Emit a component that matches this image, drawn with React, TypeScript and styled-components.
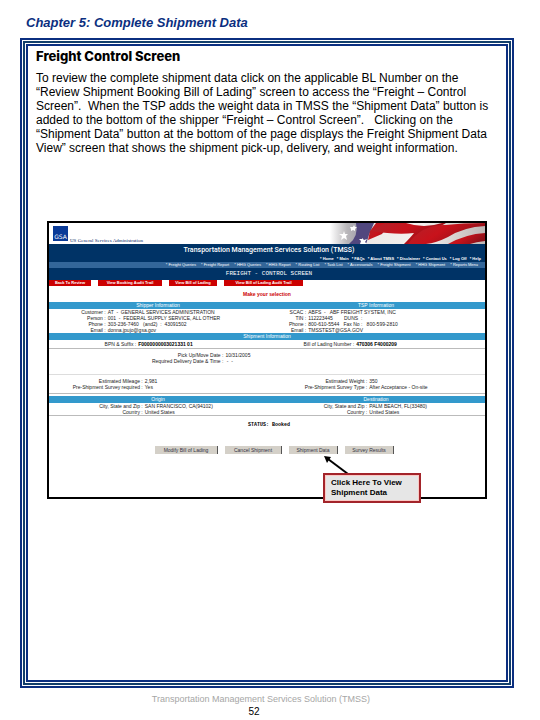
import React from 'react';
import styled, { createGlobalStyle } from 'styled-components';

const GlobalStyle = createGlobalStyle`
  *, *::before, *::after { box-sizing: border-box; }
  body { margin: 0; background: #fff; color: #000; font-family: "Liberation Sans", Arial, sans-serif; }
  h1, h2, h3, p, dl, dd { margin: 0; }
`;

const Page = styled.main`
  display: flex;
  flex-direction: column;
  min-height: 100vh;
  padding: 13px 26px 0 20px;
`;

const Chapter = styled.h1`
  height: 25px;
  padding-left: 6px;
  font-size: 13px;
  line-height: 20px;
  font-style: italic;
  font-weight: 700;
  color: #0b2f80;
`;

const FrameOuter = styled.div`
  display: flex;
  flex: 1;
  border: 2px solid #0b2f80;
  padding: 1px;
`;

const FrameMiddle = styled.div`
  display: flex;
  flex: 1;
  min-width: 0;
  border: 2px solid #123f6b;
  padding: 1px;
`;

const FrameInner = styled.article`
  flex: 1;
  min-width: 0;
  border: 2px solid #0b2f80;
  padding: 2px 8px 24px;
`;

const SectionTitle = styled.h2`
  font-family: Inter, "Liberation Sans", sans-serif;
  font-size: 13px;
  line-height: 16px;
  font-weight: 800;
`;

const Paragraph = styled.p`
  margin-top: 7px;
  font-size: 12px;
  line-height: 14px;
  white-space: pre-line;
`;

const Screen = styled.section`
  position: relative;
  margin: 66px 11px 0;
  border: 2px solid #000;
  min-height: 278px;
  font-size: 5px;
  line-height: 6px;
  color: #222;
`;

const Banner = styled.div`
  display: flex;
  justify-content: space-between;
  height: 21px;
`;

const Brand = styled.div`
  display: flex;
  align-items: flex-end;
  gap: 2px;
  padding-left: 4px;
`;

const Logo = styled.span`
  width: 15px;
  height: 15px;
  margin-bottom: 3px;
  padding-top: 7px;
  background: #0a3a97;
  color: #fff;
  font: 6px/7px "DejaVu Sans", sans-serif;
  text-align: center;
`;

const BrandName = styled.span`
  font: 400 5px/7px "Liberation Serif", serif;
  color: #0a2a68;
`;

const Flag = styled.svg`
  display: block;
  width: 155px;
  height: 21px;
`;

const Masthead = styled.header`
  background: #003366;
  color: #fff;
  text-align: center;
`;

const SystemName = styled.div`
  height: 12px;
  padding-left: 4px;
  font: 500 7px/12px Roboto, sans-serif;
`;

const LinkRow = styled.nav<{ $bar?: boolean }>`
  display: flex;
  justify-content: flex-end;
  gap: ${(p) => (p.$bar ? 5 : 3)}px;
  height: 6px;
  padding-right: ${(p) => (p.$bar ? 7 : 4)}px;
  background: ${(p) => (p.$bar ? '#336699' : 'transparent')};
  font-size: 4px;
  font-weight: ${(p) => (p.$bar ? 400 : 700)};
  white-space: nowrap;
`;

const NavLink = styled.a`
  color: inherit;
  text-decoration: none;
`;

const ScreenName = styled.div`
  height: 12px;
  padding-left: 4px;
  font: 6px/12px "Liberation Mono", monospace;
`;

const TabRow = styled.div`
  display: flex;
  gap: 7px;
  height: 6px;
`;

const Tab = styled.button<{ $width: number }>`
  width: ${(p) => p.$width}px;
  height: 6px;
  padding: 0;
  border: 0;
  background: #cc0000;
  color: #fff;
  font: 700 4px/6px "Liberation Sans", sans-serif;
`;

const Prompt = styled.p`
  height: 16px;
  color: #cc0000;
  font-weight: 700;
  line-height: 16px;
  text-align: center;
`;

const Columns = styled.div`
  display: grid;
  grid-template-columns: 1fr 1fr;
`;

const Heading = styled.h3<{ $gap?: boolean }>`
  height: 7px;
  margin-top: ${(p) => (p.$gap ? 2 : 0)}px;
  background: #3399cc;
  color: #fff;
  font-size: 5px;
  line-height: 7px;
  font-weight: 400;
  text-align: center;
`;

const Fields = styled.dl<{ $split: number; $pad?: number; $rule?: boolean }>`
  display: grid;
  grid-template-columns: ${(p) => p.$split}% 1fr;
  align-content: start;
  padding: ${(p) => p.$pad ?? 0}px 0;
  border-bottom: ${(p) => (p.$rule ? '1px solid #bbb' : '0')};
  white-space: pre;
`;

const Term = styled.dt`
  text-align: right;
`;

const Value = styled.dd<{ $strong?: boolean }>`
  padding-left: 2px;
  font-weight: ${(p) => (p.$strong ? 700 : 400)};
  color: ${(p) => (p.$strong ? '#000' : 'inherit')};
`;

const Dates = styled.div`
  height: 26px;
  border-bottom: 1px solid #ddd;
`;

const Status = styled.p`
  padding: 6px 0 0 4px;
  color: #000;
  font: 700 5px/6px "Liberation Mono", monospace;
  text-align: center;
`;

const Actions = styled.div`
  display: flex;
  gap: 7px;
  margin-top: 18px;
  padding-left: 106px;
`;

const ActionButton = styled.button<{ $width: number }>`
  width: ${(p) => p.$width}px;
  height: 8px;
  padding: 0;
  border: 0;
  border-right: 1px solid #555;
  background: #d4d0c8;
  color: #334;
  font: 5px/8px "Liberation Sans", sans-serif;
  white-space: nowrap;
`;

const Callout = styled.div`
  position: absolute;
  left: 274px;
  top: 250px;
  width: 98px;
  padding: 3px 0 3px 6px;
  border: 2px solid #a3242a;
  background: #e6e6e6;
  box-shadow: inset 0 0 0 1px #fbc9c4;
  color: #000;
  font: 700 8px/10px "Liberation Sans", sans-serif;
`;

const Arrow = styled.svg`
  position: absolute;
  left: 273px;
  top: 232px;
  width: 30px;
  height: 20px;
`;

const Footer = styled.footer`
  height: 32px;
  padding: 5px 12px 0 0;
  color: #a6a6a6;
  font-size: 9px;
  line-height: 12px;
  text-align: center;
`;

const PageNumber = styled.div`
  padding-right: 14px;
  color: #000;
  font-size: 10px;
  line-height: 14px;
`;

type Field = { label: string; value: string; strong?: boolean };

function FieldList({ items, split, pad, rule }: { items: Field[]; split: number; pad?: number; rule?: boolean }) {
  return (
    <Fields $split={split} $pad={pad} $rule={rule}>
      {items.map((f) => (
        <React.Fragment key={f.label}>
          <Term>{f.label} :</Term>
          <Value $strong={f.strong}>{f.value}</Value>
        </React.Fragment>
      ))}
    </Fields>
  );
}

const topLinks = ['Home', 'Main', 'FAQs', 'About TMSS', 'Disclaimer', 'Contact Us', 'Log Off', 'Help'];
const barLinks = ['Freight Queries', 'Freight Report', 'HHG Queries', 'HHG Report', 'Routing List', 'Task List', 'Accessorials', 'Freight Shipment', 'HHG Shipment', 'Reports Menu'];

export default function App() {
  return (
    <Page>
      <GlobalStyle />
      <Chapter>Chapter 5: Complete Shipment Data</Chapter>
      <FrameOuter>
        <FrameMiddle>
          <FrameInner>
            <SectionTitle>Freight Control Screen</SectionTitle>
            <Paragraph>
              {'To review the complete shipment data click on the applicable BL Number on the\n“Review Shipment Booking Bill of Lading” screen to access the “Freight – Control\nScreen”. \u00a0When the TSP adds the weight data in TMSS the “Shipment Data” button is\nadded to the bottom of the shipper “Freight – Control Screen”. \u00a0\u00a0Clicking on the\n“Shipment Data” button at the bottom of the page displays the Freight Shipment Data\nView” screen that shows the shipment pick-up, delivery, and weight information.'}
            </Paragraph>
            <Screen aria-label="Freight control screen">
              <Banner>
                <Brand>
                  <Logo>GSA</Logo>
                  <BrandName>US General Services Administration</BrandName>
                </Brand>
                <Flag viewBox="0 0 155 21" preserveAspectRatio="none" aria-hidden="true">
                  <defs>
                    <linearGradient id="fade">
                      <stop offset="0" stopColor="#fff" />
                      <stop offset="0.5" stopColor="#b9b7ba" />
                      <stop offset="1" stopColor="#9a96a6" />
                    </linearGradient>
                    <linearGradient id="fold" x2="1" y2="0.4">
                      <stop offset="0" stopColor="#b0242b" />
                      <stop offset="0.5" stopColor="#c8121b" />
                      <stop offset="1" stopColor="#8e1018" />
                    </linearGradient>
                    <linearGradient id="cloth">
                      <stop offset="0" stopColor="#e9e4e2" />
                      <stop offset="0.6" stopColor="#f4f1ef" />
                      <stop offset="1" stopColor="#bdb6b4" />
                    </linearGradient>
                  </defs>
                  <rect width="155" height="21" fill="url(#cloth)" />
                  <rect width="34" height="21" fill="url(#fade)" />
                  <path d="M26 0H44L39 12L36 21H19Q29 13 26 0Z" fill="#51477e" />
                  <path d="M46 0H66Q56 5 52 11L38 17L40 8Z" fill="url(#fold)" />
                  <path d="M55 0H76Q94 6 112 0H116Q98 10 86 21H74Q81 14 84 10Q66 12 42 8Z" fill="url(#fold)" />
                  <path d="M78 21Q92 1 116 2Q132 0 155 0V3Q134 4 118 14Q106 20 96 21Z" fill="url(#fold)" />
                  <path d="M118 21Q136 11 155 10V18Q146 19 140 21Z" fill="url(#fold)" />
                  <path d="M14 8l1 3h3l-2 2 1 4-3-2-3 2 1-4-3-2h4zM32 15l2 2 3-1-2 3 2 2h-7l1-3-2-2h3zM24 2l1 2h2l-2 2v2l-2-1-2 1V6l-1-2h3z" fill="#fff" />
                </Flag>
              </Banner>
              <Masthead>
                <SystemName>Transportation Management Services Solution (TMSS)</SystemName>
                <LinkRow aria-label="Site">
                  {topLinks.map((l) => <NavLink href="#" key={l}>* {l}</NavLink>)}
                </LinkRow>
                <LinkRow $bar aria-label="Tasks">
                  {barLinks.map((l) => <NavLink href="#" key={l}>* {l}</NavLink>)}
                </LinkRow>
                <ScreenName>FREIGHT - CONTROL SCREEN</ScreenName>
              </Masthead>
              <TabRow>
                <Tab $width={42}>Back To Review</Tab>
                <Tab $width={64}>View Booking Audit Trail</Tab>
                <Tab $width={48}>View Bill of Lading</Tab>
                <Tab $width={79}>View Bill of Lading Audit Trail</Tab>
              </TabRow>
              <Prompt>Make your selection</Prompt>
              <Columns>
                <Heading>Shipper Information</Heading>
                <Heading>TSP Information</Heading>
                <FieldList split={26} items={[
                  { label: 'Customer', value: 'AT  -  GENERAL SERVICES ADMINISTRATION' },
                  { label: 'Person', value: '001  -  FEDERAL SUPPLY SERVICE, ALL OTHER' },
                  { label: 'Phone', value: '303-236-7460   (and2)  :  43091502' },
                  { label: 'Email', value: 'donna.jpujo@gsa.gov' },
                ]} />
                <FieldList split={18} items={[
                  { label: 'SCAC', value: 'ABFS  -   ABF FREIGHT SYSTEM, INC' },
                  { label: 'TIN', value: '112223445        DUNS  :' },
                  { label: 'Phone', value: '800-610-5544   Fax No :   800-599-2810' },
                  { label: 'Email', value: 'TMSSTEST@GSA.GOV' },
                ]} />
              </Columns>
              <Heading>Shipment Information</Heading>
              <Columns>
                <FieldList split={40} pad={1} rule items={[{ label: 'BPN & Suffix', value: 'F0000000003021331 01', strong: true }]} />
                <FieldList split={40} pad={1} rule items={[{ label: 'Bill of Lading Number', value: '470306 F4000209', strong: true }]} />
              </Columns>
              <Dates>
                <FieldList split={40} pad={3} items={[
                  { label: 'Pick Up/Move Date', value: '10/31/2005' },
                  { label: 'Required Delivery Date & Time', value: ' -  -' },
                ]} />
              </Dates>
              <Columns>
                <FieldList split={43} pad={3} rule items={[
                  { label: 'Estimated Mileage', value: '2,981' },
                  { label: 'Pre-Shipment Survey required', value: 'Yes' },
                ]} />
                <FieldList split={46} pad={3} rule items={[
                  { label: 'Estimated Weight', value: '350' },
                  { label: 'Pre-Shipment Survey Type', value: 'After Acceptance - On-site' },
                ]} />
                <Heading $gap>Origin</Heading>
                <Heading $gap>Destination</Heading>
                <FieldList split={43} rule items={[
                  { label: 'City, State and Zip', value: 'SAN FRANCISCO, CA(94102)' },
                  { label: 'Country', value: 'United States' },
                ]} />
                <FieldList split={46} rule items={[
                  { label: 'City, State and Zip', value: 'PALM BEACH, FL(33480)' },
                  { label: 'Country', value: 'United States' },
                ]} />
              </Columns>
              <Status>STATUS:  Booked</Status>
              <Actions>
                <ActionButton $width={63}>Modify Bill of Lading</ActionButton>
                <ActionButton $width={57}>Cancel Shipment</ActionButton>
                <ActionButton $width={49}>Shipment Data</ActionButton>
                <ActionButton $width={49}>Survey Results</ActionButton>
              </Actions>
              <Arrow viewBox="0 0 30 20" aria-hidden="true">
                <path d="M6 4L26 19" stroke="#000" strokeWidth="2" />
                <path d="M2 1L9 2L5 8Z" fill="#000" />
              </Arrow>
              <Callout>Click Here To View<br />Shipment Data</Callout>
            </Screen>
          </FrameInner>
        </FrameMiddle>
      </FrameOuter>
      <Footer>
        Transportation Management Services Solution (TMSS)
        <PageNumber>52</PageNumber>
      </Footer>
    </Page>
  );
}
